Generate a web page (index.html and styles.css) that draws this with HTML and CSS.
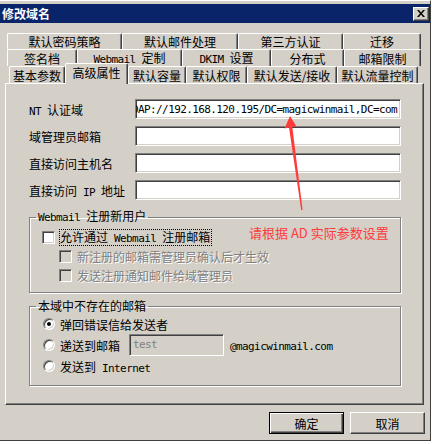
FILE: index.html
```html
<!DOCTYPE html>
<html lang="zh-CN">
<head>
<meta charset="utf-8">
<title>修改域名</title>
<link rel="stylesheet" href="styles.css">
</head>
<body>
<div class="window">
  <div class="titlebar">
    <span class="title">修改域名</span>
    <span class="close"><svg width="8" height="7" viewBox="0 0 8 7"><path d="M0 0h2l2 2.4L6 0h2L5 3.5 8 7H6L4 4.6 2 7H0l3-3.5z" fill="#000"/></svg></span>
  </div>

  <div class="tabs">
    <div class="tabrow r1">
      <div class="tab w115">默认密码策略</div>
      <div class="tab w116">默认邮件处理</div>
      <div class="tab w105">第三方认证</div>
      <div class="tab w78">迁移</div>
    </div>
    <div class="tabrow r2">
      <div class="tab w70">签名档</div>
      <div class="tab w105"><span><span class="m">Webmail </span>定制</span></div>
      <div class="tab w89"><span><span class="m">DKIM </span>设置</span></div>
      <div class="tab w73">分布式</div>
      <div class="tab w77">邮箱限制</div>
    </div>
    <div class="tabrow r3">
      <div class="tab w56">基本参数</div>
      <div class="tab w63 active">高级属性</div>
      <div class="tab w58">默认容量</div>
      <div class="tab w61">默认权限</div>
      <div class="tab w90">默认发送/接收</div>
      <div class="tab w81">默认流量控制</div>
    </div>
  </div>

  <div class="panel">
    <div class="fields">
      <div class="label"><span><span class="m">NT </span>认证域</span></div>
      <div class="input ldap"><span class="m">LDAP://192.168.120.195/DC=magicwinmail,DC=com</span></div>
      <div class="label">域管理员邮箱</div>
      <div class="input"></div>
      <div class="label">直接访问主机名</div>
      <div class="input"></div>
      <div class="label"><span>直接访问<span class="m"> IP </span>地址</span></div>
      <div class="input"></div>
    </div>

    <fieldset class="group g1">
      <legend><span class="m">Webmail </span>注册新用户</legend>
      <div class="cbrow">
        <span class="check"></span>
        <span class="focus"><span>允许通过<span class="m"> Webmail </span>注册邮箱</span></span>
      </div>
      <div class="cbrow sub">
        <span class="check off"></span>
        <span class="dis">新注册的邮箱需管理员确认后才生效</span>
      </div>
      <div class="cbrow sub">
        <span class="check off"></span>
        <span class="dis">发送注册通知邮件给域管理员</span>
      </div>
    </fieldset>

    <fieldset class="group g2">
      <legend>本域中不存在的邮箱</legend>
      <div class="rrow">
        <span class="radio on"></span>
        <span>弹回错误信给发送者</span>
      </div>
      <div class="rrow tall">
        <span class="radio"></span>
        <span>递送到邮箱</span>
        <span class="mailbox"><span class="m">test</span></span>
        <span class="m domain">@magicwinmail.com</span>
      </div>
      <div class="rrow">
        <span class="radio"></span>
        <span>发送到<span class="m"> Internet</span></span>
      </div>
    </fieldset>
  </div>

  <div class="footer">
    <div class="btn default">确定</div>
    <div class="btn">取消</div>
  </div>

  <div class="note">请根据 AD 实际参数设置</div>
  <svg class="arrow" width="432" height="444" viewBox="0 0 432 444">
    <polygon points="290,116 284.5,128.5 289,127.5 301.2,210 302.6,210 292.3,127 296.5,126.5" fill="#ff3a3a"/>
  </svg>
</div>
</body>
</html>
```
FILE: styles.css
```css
* { box-sizing: border-box; }

body {
  margin: 0;
  background: #fff;
  font-family: "Noto Sans CJK SC", "Liberation Sans", sans-serif;
  font-size: 12px;
  color: #000;
}

.m {
  font-family: "DejaVu Sans Mono", "Liberation Mono", monospace;
  font-size: 11px;
  letter-spacing: -0.6px;
}

.window {
  position: relative;
  width: 431px;
  height: 441px;
  background: #d4d0c8;
  border-top: 1px solid #fff;
  border-right: 1px solid #404040;
  border-bottom: 1px solid #404040;
  padding-top: 3px;
}

.titlebar {
  height: 19px;
  background: #0a246a;
  color: #fff;
  font-weight: bold;
  display: flex;
  align-items: center;
  justify-content: space-between;
  padding: 0 1px 0 2px;
  line-height: 19px;
}

.close {
  width: 16px;
  height: 14px;
  background: #d4d0c8;
  border: 1px solid;
  border-color: #fff #404040 #404040 #fff;
  box-shadow: inset -1px -1px #808080;
  display: flex;
  align-items: center;
  justify-content: center;
}

/* tabs */
.tabs {
  margin-top: 10px;
  padding-left: 7px;
}

.tabrow {
  display: flex;
  align-items: flex-end;
}

.r1 { height: 16px; }
.r2 { height: 17px; }
.r3 { height: 17px; margin-left: 2px; }

.tab {
  height: 100%;
  background: #d4d0c8;
  border-top: 1px solid #fff;
  border-left: 1px solid #fff;
  border-right: 1px solid #404040;
  box-shadow: inset -1px 0 #808080;
  border-radius: 2px 2px 0 0;
  display: flex;
  align-items: center;
  justify-content: center;
  white-space: pre;
  line-height: 14px;
  padding-top: 1px;
}

.tab.active {
  position: relative;
  z-index: 1;
  height: 21px;
  margin-bottom: -1px;
  padding-bottom: 3px;
}

.w56 { width: 56px; }
.w58 { width: 58px; }
.w61 { width: 61px; }
.w63 { width: 63px; }
.w70 { width: 70px; }
.w73 { width: 73px; }
.w77 { width: 77px; }
.w78 { width: 78px; }
.w81 { width: 81px; }
.w89 { width: 89px; }
.w90 { width: 90px; }
.w105 { width: 105px; }
.w115 { width: 115px; }
.w116 { width: 116px; }

/* panel */
.panel {
  margin-left: 5px;
  width: 419px;
  height: 322px;
  border-top: 1px solid #fff;
  border-left: 1px solid #fff;
  border-right: 1px solid #404040;
  border-bottom: 1px solid #404040;
  box-shadow: inset -1px -1px #808080;
  padding: 15px 0 0 23px;
}

.fields {
  display: grid;
  grid-template-columns: 106px 266px;
  grid-auto-rows: 20px;
  row-gap: 7px;
}

.label {
  display: flex;
  align-items: center;
  white-space: pre;
}

.input {
  height: 20px;
  background: #fff;
  border: 1px solid;
  border-color: #808080 #fff #fff #808080;
  box-shadow: inset 1px 1px #404040, inset -1px -1px #d4d0c8;
  display: flex;
  align-items: center;
  overflow: hidden;
  white-space: nowrap;
}

.input.ldap {
  justify-content: flex-end;
  padding-right: 3px;
}

/* group boxes */
.group {
  margin: 9px 0 0;
  padding: 0 0 7px;
  width: 372px;
  border: 1px solid #808080;
  box-shadow: 1px 1px 0 #fff, inset 1px 1px 0 #fff;
  min-width: 0;
}

.group legend {
  margin-left: 6px;
  padding: 0 2px;
  line-height: 14px;
  white-space: pre;
}

.g1 { padding-top: 3px; }

.g2 {
  margin-top: 6px;
  padding-top: 1px;
  padding-bottom: 9px;
}

.cbrow {
  height: 19px;
  display: flex;
  align-items: center;
  padding-left: 12px;
  white-space: pre;
}

.cbrow.sub { padding-left: 29px; }

.check {
  width: 13px;
  height: 13px;
  flex: none;
  background: #fff;
  border: 1px solid;
  border-color: #808080 #fff #fff #808080;
  box-shadow: inset 1px 1px #404040, inset -1px -1px #d4d0c8;
  margin-right: 4px;
}

.check.off { background: #d4d0c8; }

.focus {
  border: 1px dotted #000;
  padding: 0 1px 0 0;
  height: 17px;
  line-height: 15px;
  display: flex;
  align-items: center;
}

.dis {
  color: #808080;
  text-shadow: 1px 1px 0 #fff;
  margin-left: 1px;
}

.rrow {
  height: 20px;
  display: flex;
  align-items: center;
  padding-left: 13px;
  white-space: pre;
}

.rrow.tall { height: 22px; }

.radio {
  width: 12px;
  height: 12px;
  flex: none;
  border-radius: 50%;
  background: #fff;
  border: 1px solid;
  border-color: #808080 #fff #fff #808080;
  box-shadow: inset 1px 1px #404040, inset -1px -1px #d4d0c8;
  margin-right: 5px;
  display: flex;
  align-items: center;
  justify-content: center;
}

.radio.on::after {
  content: "";
  width: 4px;
  height: 4px;
  border-radius: 50%;
  background: #000;
}

.mailbox {
  width: 95px;
  height: 22px;
  margin-left: 9px;
  background: #d4d0c8;
  border: 1px solid;
  border-color: #808080 #fff #fff #808080;
  box-shadow: inset 1px 1px #404040, inset -1px -1px #d4d0c8;
  color: #808080;
  display: flex;
  align-items: flex-start;
  padding: 3px 0 0 3px;
}

.domain { margin-left: 6px; padding-top: 2px; }

/* footer */
.footer {
  display: flex;
  justify-content: flex-end;
  gap: 6px;
  margin-top: 7px;
  padding-right: 5px;
}

.btn {
  width: 75px;
  height: 22px;
  background: #d4d0c8;
  border: 1px solid;
  border-color: #fff #404040 #404040 #fff;
  box-shadow: inset -1px -1px #808080;
  display: flex;
  align-items: center;
  justify-content: center;
}

.btn.default {
  border: 1px solid #000;
  box-shadow: inset 1px 1px #fff, inset -1px -1px #404040, inset -2px -2px #808080;
}

/* annotation overlay */
.note {
  position: absolute;
  left: 249px;
  top: 223px;
  color: #ff3a3a;
  font-size: 13px;
  line-height: 17px;
  white-space: nowrap;
}

.arrow {
  position: absolute;
  left: 0;
  top: -1px;
  pointer-events: none;
}
```
